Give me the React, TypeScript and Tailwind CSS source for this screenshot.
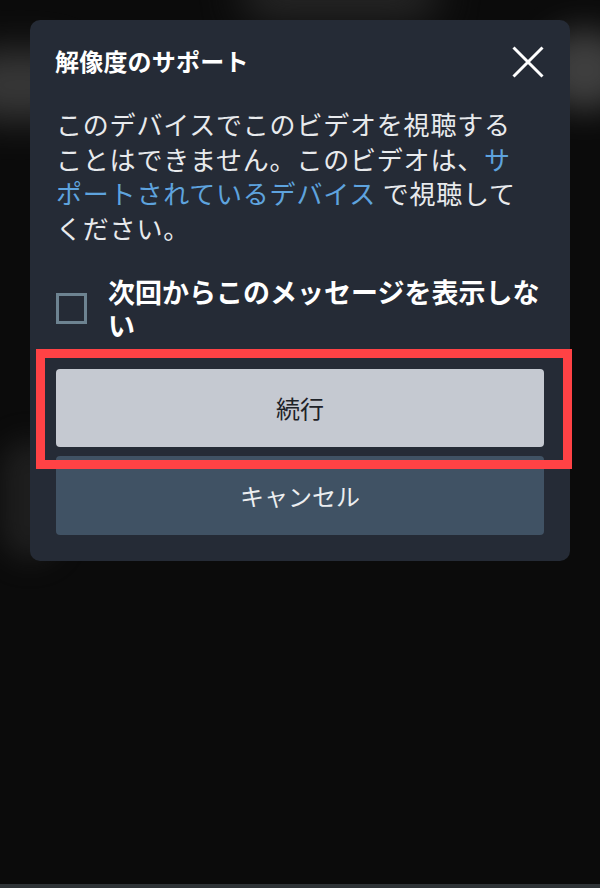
import { useState } from 'react'

const FONT = '"Noto Sans CJK JP", "Noto Sans", sans-serif'

export default function App() {
  const [dontShow, setDontShow] = useState(false)

  return (
    <div
      className="relative w-[600px] h-[888px] overflow-hidden bg-[#0b0b0b] flex flex-col"
      style={{ fontFamily: FONT }}
    >
      {/* blurred video behind the overlay */}
      <div className="absolute inset-x-0 top-0 h-[560px] pointer-events-none">
        <div className="absolute left-[-40px] top-[50px] w-[120px] h-[70px] rounded-full bg-[#4a4a4a] blur-[18px] opacity-70" />
        <div className="absolute left-[240px] top-[-30px] w-[200px] h-[50px] rounded-full bg-[#3a3a3a] blur-[20px] opacity-60" />
        <div className="absolute right-[-30px] top-[30px] w-[90px] h-[80px] rounded-full bg-[#555] blur-[16px] opacity-70" />
        <div className="absolute left-[0px] top-[440px] w-[60px] h-[120px] rounded-full bg-[#2a2a2a] blur-[14px] opacity-60" />
      </div>

      {/* dialog */}
      <div className="relative mt-[20px] mx-[30px] rounded-[10px] bg-[#252b36] pt-[26px] pb-[26px] px-[26px]">
        <div className="flex items-center justify-between h-[32px]">
          <h2 className="text-[24px] font-bold text-white tracking-[0.2px] leading-none -mt-[2px] -ml-[1px]">
            解像度のサポート
          </h2>
          <button className="w-[32px] h-[32px] flex items-center justify-center">
            <svg width="32" height="32" viewBox="0 0 32 32" fill="none" stroke="#ffffff" strokeWidth="3">
              <path d="M1.5 1.5 L30.5 30.5 M30.5 1.5 L1.5 30.5" />
            </svg>
          </button>
        </div>

        <p className="mt-[29px] w-[470px] text-[26px] leading-[34.5px] tracking-[0.8px] text-[#e8eaed]">
          このデバイスでこのビデオを視聴することはできません。このビデオは、
          <span className="text-[#5ea3de]">サポートされているデバイス</span> で視聴してください。
        </p>

        <label className="mt-[30px] flex items-center gap-[21px] cursor-pointer -mr-[8px]">
          <span
            onClick={() => setDontShow(!dontShow)}
            className="w-[31px] h-[31px] shrink-0 border-[3px] border-[#6d8391]"
          />
          <span className="text-[27px] leading-[33px] font-bold text-white">
            次回からこのメッセージを表示しない
          </span>
        </label>

        <div className="mt-[28px] flex flex-col gap-[9px]">
          <button className="h-[78px] w-full rounded-[4px] bg-[#c5c9d1] text-[24px] text-[#1e2228]">
            続行
          </button>
          <button className="h-[79px] w-full rounded-[4px] bg-[#405264] text-[24px] text-[#eceef0]">
            キャンセル
          </button>
        </div>
      </div>

      {/* red highlight over the continue button */}
      <div className="absolute left-[36px] top-[349px] w-[536px] h-[120px] border-[9px] border-[#ff4245] pointer-events-none" />

      <div className="mt-auto h-[4px] bg-[#2f3437]" />
    </div>
  )
}
